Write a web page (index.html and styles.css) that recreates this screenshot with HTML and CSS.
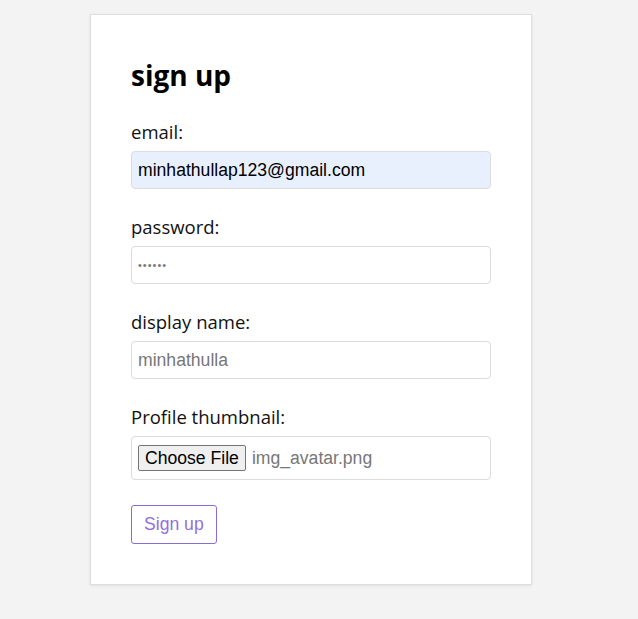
FILE: index.html
```html
<!DOCTYPE html>
<html>
<head>
<meta charset="utf-8">
<link rel="stylesheet" href="styles.css">
</head>
<body>
<div class="card">
  <h2 class="title">sign up</h2>
  <form class="form">
    <div class="field">
      <label class="label">email:</label>
      <div class="input filled">minhathullap123@gmail.com</div>
    </div>
    <div class="field">
      <label class="label">password:</label>
      <div class="input dots">••••••</div>
    </div>
    <div class="field">
      <label class="label">display name:</label>
      <div class="input placeholder">minhathulla</div>
    </div>
    <div class="field">
      <label class="label">Profile thumbnail:</label>
      <div class="input file">
        <span class="file-btn">Choose File</span>
        <span class="file-name">img_avatar.png</span>
      </div>
    </div>
    <div class="actions">
      <button type="button" class="submit">Sign up</button>
    </div>
  </form>
</div>
</body>
</html>
```
FILE: styles.css
```css
html, body {
  margin: 0;
  padding: 0;
  background: #f3f3f3;
}
body {
  padding-top: 14px;
  height: 605px;
}
.card {
  margin-left: 90px;
  width: 360px;
  padding: 40px 40px 40px 40px;
  background: #fff;
  border: 1px solid #dedede;
  box-shadow: 0 1px 3px rgba(0,0,0,0.08);
  font-family: "Open Sans", sans-serif;
}
.title {
  margin: 0 0 23px 0;
  font-size: 28px;
  line-height: 40px;
  font-weight: 700;
  color: #000;
}
.form {
  display: flex;
  flex-direction: column;
  gap: 24px;
}
.field {
  display: flex;
  flex-direction: column;
}
.label {
  font-size: 18.5px;
  line-height: 28px;
  color: #111;
  margin-bottom: 5px;
}
.input {
  box-sizing: border-box;
  height: 38px;
  border: 1px solid #dcdcdc;
  border-radius: 4px;
  padding: 0 6px;
  display: flex;
  align-items: center;
  font-family: "Liberation Sans", Arial, sans-serif;
  font-size: 17.6px;
  color: #000;
}
.filled {
  background: #e8f0fe;
}
.dots {
  font-size: 11px;
  color: #777;
  letter-spacing: 1px;
}
.placeholder {
  color: #777;
}
.file {
  height: 44px;
  gap: 6px;
}
.file-btn {
  box-sizing: border-box;
  height: 26px;
  padding: 0 6px;
  display: flex;
  align-items: center;
  background: #efefef;
  border: 1px solid #767676;
  border-radius: 2px;
  color: #000;
}
.file-name {
  color: #777;
}
.actions {
  display: flex;
  margin-top: 1px;
}
.submit {
  box-sizing: border-box;
  height: 39px;
  padding: 0 12px;
  background: #fff;
  border: 1px solid #8a6bdc;
  border-radius: 3px;
  color: #9370db;
  font-family: "Liberation Sans", Arial, sans-serif;
  font-size: 17.6px;
}
```
